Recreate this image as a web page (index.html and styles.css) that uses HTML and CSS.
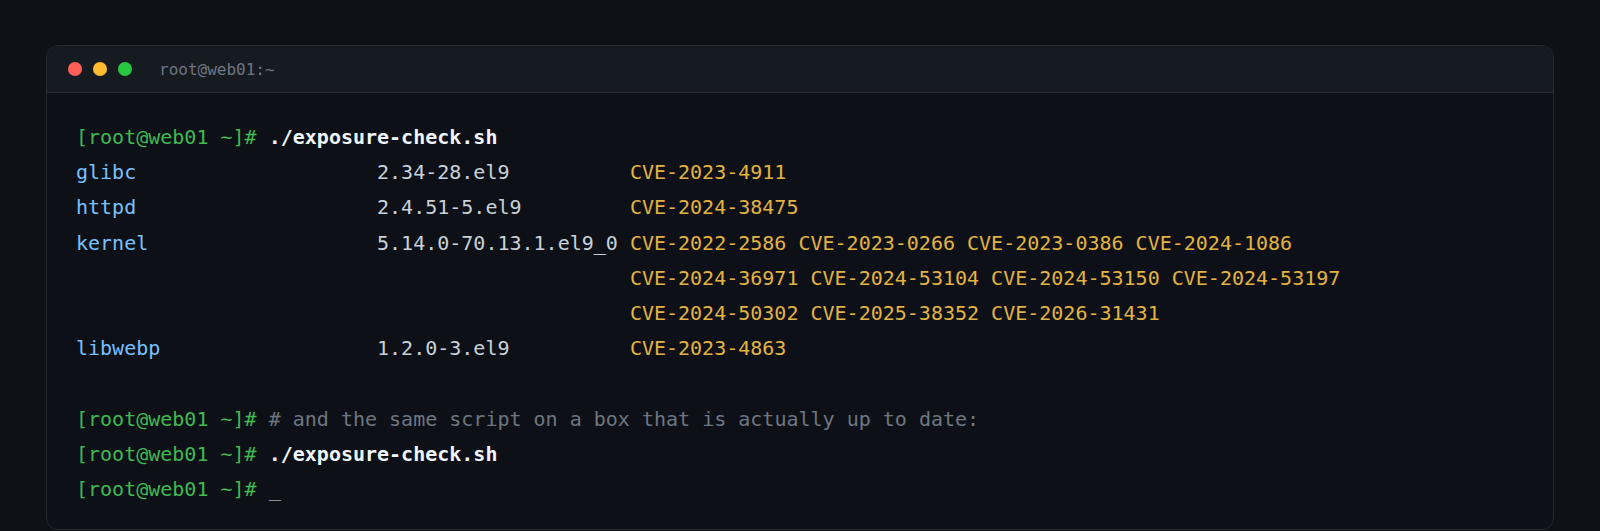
FILE: index.html
```html
<!DOCTYPE html>
<html lang="en">
<head>
<meta charset="utf-8">
<title>root@web01:~</title>
<link rel="stylesheet" href="styles.css">
</head>
<body>
<div class="window">
  <div class="titlebar">
    <div class="dots">
      <span class="dot red"></span>
      <span class="dot yellow"></span>
      <span class="dot green"></span>
    </div>
    <span class="title">root@web01:~</span>
  </div>
  <div class="term">
    <div class="line"><span class="prompt">[root@web01 ~]#</span> <span class="cmd">./exposure-check.sh</span></div>
    <div class="row">
      <span class="pkg">glibc</span>
      <span class="ver">2.34-28.el9</span>
      <div class="cves"><div class="line">CVE-2023-4911</div></div>
    </div>
    <div class="row">
      <span class="pkg">httpd</span>
      <span class="ver">2.4.51-5.el9</span>
      <div class="cves"><div class="line">CVE-2024-38475</div></div>
    </div>
    <div class="row">
      <span class="pkg">kernel</span>
      <span class="ver">5.14.0-70.13.1.el9_0</span>
      <div class="cves">
        <div class="line">CVE-2022-2586 CVE-2023-0266 CVE-2023-0386 CVE-2024-1086</div>
        <div class="line">CVE-2024-36971 CVE-2024-53104 CVE-2024-53150 CVE-2024-53197</div>
        <div class="line">CVE-2024-50302 CVE-2025-38352 CVE-2026-31431</div>
      </div>
    </div>
    <div class="row">
      <span class="pkg">libwebp</span>
      <span class="ver">1.2.0-3.el9</span>
      <div class="cves"><div class="line">CVE-2023-4863</div></div>
    </div>
    <div class="line blank">&nbsp;</div>
    <div class="line"><span class="prompt">[root@web01 ~]#</span> <span class="comment"># and the same script on a box that is actually up to date:</span></div>
    <div class="line"><span class="prompt">[root@web01 ~]#</span> <span class="cmd">./exposure-check.sh</span></div>
    <div class="line"><span class="prompt">[root@web01 ~]#</span> <span class="cursor">_</span></div>
  </div>
</div>
</body>
</html>
```

FILE: styles.css
```css
html, body {
  margin: 0;
  padding: 0;
  background: #0e1115;
}

body {
  padding: 45px 46px 0;
  font-family: "DejaVu Sans Mono", "Liberation Mono", monospace;
}

.window {
  border: 1px solid #262b33;
  border-radius: 12px;
  background: #0d1117;
  overflow: hidden;
}

.titlebar {
  height: 46px;
  display: flex;
  align-items: center;
  padding-left: 21px;
  background: #161b22;
  border-bottom: 1px solid #262c34;
}

.dots {
  display: flex;
  gap: 11px;
}

.dot {
  width: 14px;
  height: 14px;
  border-radius: 50%;
  display: block;
}

.red { background: #ff5f57; }
.yellow { background: #febc2e; }
.green { background: #28c840; }

.title {
  margin-left: 27px;
  font-size: 16px;
  color: #6e7681;
}

.term {
  padding: 27px 29px 22px;
  font-size: 20px;
  line-height: 35.2px;
  color: #c9d1d9;
}

.line {
  white-space: nowrap;
}

.row {
  display: grid;
  grid-template-columns: 25ch 21ch 1fr;
  white-space: nowrap;
}

.prompt { color: #3fb950; }
.cmd { color: #f0f6fc; font-weight: bold; }
.pkg { color: #79c0ff; }
.ver { color: #c9d1d9; }
.cves { color: #e3b341; }
.comment { color: #6e7681; }
.cursor { color: #8b949e; }
```
